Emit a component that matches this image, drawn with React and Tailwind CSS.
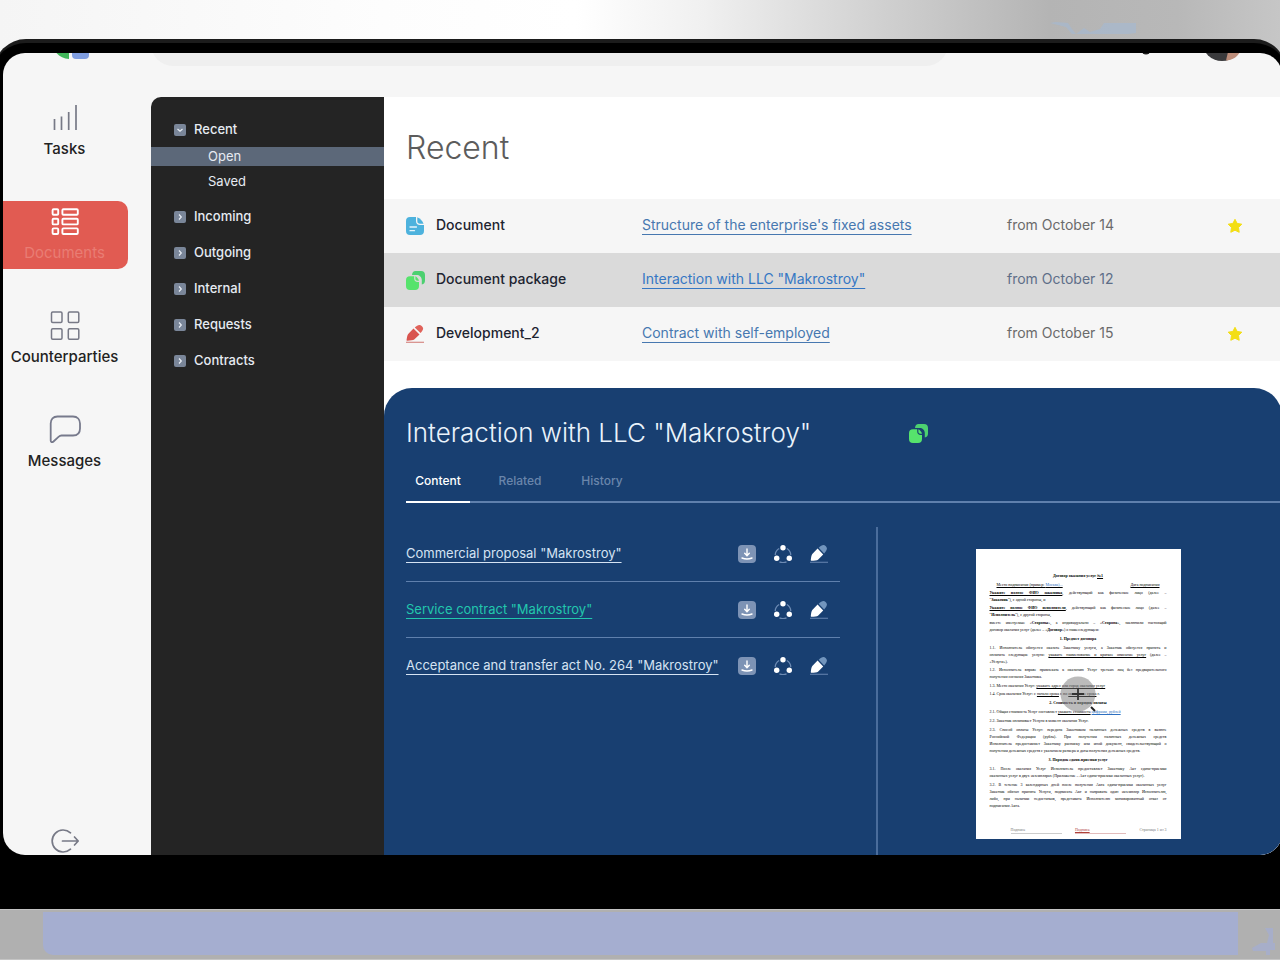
import { useState } from 'react';
import clsx from 'clsx';

const SECTIONS = [
  { label: 'Tasks', icon: TasksIcon },
  { label: 'Documents', icon: DocumentsIcon, active: true },
  { label: 'Counterparties', icon: CounterpartiesIcon },
  { label: 'Messages', icon: MessagesIcon }
];

const FOLDERS = [
  { label: 'Recent', children: ['Open', 'Saved'] },
  { label: 'Incoming' },
  { label: 'Outgoing' },
  { label: 'Internal' },
  { label: 'Requests' },
  { label: 'Contracts' }
];

const DOCUMENTS = [
  {
    name: 'Document',
    title: "Structure of the enterprise's fixed assets",
    date: 'from October 14',
    icon: FileIcon,
    starred: true
  },
  {
    name: 'Document package',
    title: 'Interaction with LLC "Makrostroy"',
    date: 'from October 12',
    icon: PackageIcon,
    selected: true
  },
  {
    name: 'Development_2',
    title: 'Contract with self-employed',
    date: 'from October 15',
    icon: DraftIcon,
    starred: true
  }
];

const TABS = ['Content', 'Related', 'History'];

const FILES = [
  { title: 'Commercial proposal "Makrostroy"' },
  { title: 'Service contract "Makrostroy"', active: true },
  { title: 'Acceptance and transfer act No. 264 "Makrostroy"' }
];

function TasksIcon() {
  return (
    <svg width="32" height="32" viewBox="0 0 32 32" fill="none" stroke="#777986" strokeWidth="1.7">
      <path d="M5.5 17v11M12.5 14.5v13.5M19.7 10v18M27 3v25" />
    </svg>
  );
}

function DocumentsIcon() {
  return (
    <svg width="32" height="32" viewBox="0 0 32 32" fill="none" stroke="#fff" strokeWidth="1.9">
      {[3.2, 12.8, 22.4].map((y) => (
        <g key={y}>
          <rect x="3.6" y={y} width="5.6" height="5.6" rx="1" />
          <rect x="13.4" y={y} width="15.4" height="5.6" rx="1" />
        </g>
      ))}
    </svg>
  );
}

function CounterpartiesIcon() {
  return (
    <svg width="32" height="32" viewBox="0 0 32 32" fill="none" stroke="#777986" strokeWidth="1.5">
      <rect x="2.5" y="2" width="10.5" height="10.5" rx="1.2" />
      <rect x="19.3" y="2" width="10.5" height="10.5" rx="1.2" />
      <rect x="2.5" y="18.8" width="10.5" height="10.5" rx="1.2" />
      <rect x="19.3" y="18.8" width="10.5" height="10.5" rx="1.2" />
    </svg>
  );
}

function MessagesIcon() {
  return (
    <svg width="32" height="32" viewBox="0 0 32 32" fill="none" stroke="#777a8c" strokeWidth="1.8" strokeLinejoin="round">
      <path d="M8.5 2.5H24c4.5 0 7 3 7 7v5c0 4.500-2.500 7-7 7H12.500c-1.500 0-2 .4-3 1.300L4.500 27.500c-1.500 1.200-2.800.6-2.800-1V9.500c0-4.500 2.500-7 6.800-7z" />
    </svg>
  );
}

function LogoutIcon() {
  return (
    <svg width="32" height="28" viewBox="0 0 32 28" fill="none" stroke="#777986" strokeWidth="1.7" strokeLinecap="round" strokeLinejoin="round">
      <path d="M21.5 5.800A11 11 0 1 0 21.500 22.200M13.500 14H29M25.500 10l3.700 4-3.700 4" />
    </svg>
  );
}

function Chevron({ open }) {
  return (
    <svg width="12" height="12" viewBox="0 0 12 12" fill="none">
      <rect width="12" height="12" rx="2" fill="#7a8699" />
      <path
        d={open ? 'M3.5 5L6 7.3 8.5 5' : 'M5 3.5L7.3 6 5 8.5'}
        stroke="#e8edf4"
        strokeWidth="1.2"
      />
    </svg>
  );
}

function FileIcon() {
  return (
    <svg width="18" height="18" viewBox="0 0 18 18">
      <path d="M4 0h6v4c0 2.500 1.500 4 4 4h4v6c0 2.600-1.400 4-4 4H4c-2.600 0-4-1.400-4-4V4c0-2.600 1.400-4 4-4z" fill="#4db2dd" />
      <path d="M11.300.3c2.600 1.200 5 3.400 6.300 6.500H14c-1.800 0-2.700-1-2.700-2.700z" fill="#4db2dd" />
      <path d="M4 10h6.500M4 13.700h4.500" stroke="#e3f4fb" strokeWidth="1.3" strokeLinecap="round" />
    </svg>
  );
}

function PackageIcon() {
  return (
    <svg width="19" height="19" viewBox="0 0 19 19">
      <path d="M9.500 0H15c2.700 0 4 1.300 4 4v5.500c0 2.200-1 3.700-3.200 4V9c0-3-2.500-5-5-5H6C6.200 1.300 7.400 0 9.500 0z" fill="#4cd070" />
      <path d="M4 5.200h4.200v2.300c0 2.200 1.200 3.500 3.500 3.500H13v4c0 2.700-1.300 4-4 4H4c-2.700 0-4-1.300-4-4V9.200c0-2.700 1.300-4 4-4z" fill="#56e36c" />
      <path d="M9.400 5.200c1.800 1 3 2.500 3.600 4.500h-1.600c-1.300 0-2-.7-2-2z" fill="#56e36c" />
    </svg>
  );
}

function DraftIcon() {
  return (
    <svg width="18" height="18" viewBox="0 0 18 18">
      <path d="M7.500 3.400l6 6-5.300 5.200c-.8.8-4 1.100-6.900 1.200-.6 0-.8-.4-.7-1 .3-2.300.7-5 1.600-5.900z" fill="#d9544f" />
      <path d="M8.800 2.600C11.600-.2 13.700-.7 15.700.9c2.100 1.800 1.900 4-1.200 7.200z" fill="#e0625a" />
      <path d="M0 17.300h18" stroke="#d68b86" strokeWidth="1.2" />
    </svg>
  );
}

function StarIcon() {
  return (
    <svg width="16" height="16" viewBox="0 0 16 16" fill="#f3de14" stroke="#f3de14" strokeLinejoin="round">
      <path d="M8 1.300l2.100 4.100 4.700.8-3.300 3.300.7 4.800L8 12.200l-4.200 2.100.7-4.800L1.200 6.200l4.700-.8z" />
    </svg>
  );
}

function DownloadIcon() {
  return (
    <svg width="18" height="18" viewBox="0 0 18 18" fill="none" strokeLinecap="round">
      <rect width="18" height="18" rx="4" fill="#7d93b5" />
      <path d="M9 4v6.500M6.700 8.300L9 10.700l2.300-2.400" stroke="#fff" strokeWidth="1.4" />
      <path d="M4 13c3 1.200 7 1.200 10 0" stroke="#fff" strokeWidth="1.4" />
    </svg>
  );
}

function ShareIcon() {
  return (
    <svg width="18" height="18" viewBox="0 0 18 18" fill="none">
      <path d="M5.200 3.500A8 8 0 0 0 1.200 10M12.800 3.500a8 8 0 0 1 4 6.500M5.500 16.800c2 1 5 1 7 0" stroke="#6d8bb4" strokeWidth="1.3" />
      <circle cx="9" cy="2.7" r="2.7" fill="#fff" />
      <circle cx="2.7" cy="13.3" r="2.7" fill="#fff" />
      <circle cx="15.3" cy="13.3" r="2.7" fill="#fff" />
    </svg>
  );
}

function SignIcon() {
  return (
    <svg width="18" height="18" viewBox="0 0 18 18">
      <path d="M7.600 3.600l5.600 5.900-5.200 5.200c-.8.800-3.800 1-6.500 1.100-.6 0-.8-.4-.7-1 .3-2.300.7-4.900 1.500-5.800z" fill="#fff" />
      <path d="M8.700 2.700C11.600-.2 13.800-.6 15.600.9c2.100 1.800 1.700 4.300-1.500 7.500z" fill="#7295bd" />
      <path d="M0 17.300h18" stroke="#5c7ba8" strokeWidth="1.2" />
    </svg>
  );
}

function TopBar() {
  return (
    <header className="-mt-8 flex h-[76px] shrink-0 items-start">
      <div className="flex w-[148px] shrink-0 justify-center pr-3">
        <svg width="36" height="38" viewBox="0 0 36 38">
          <path d="M0 19h16v19C9 37.500 3 34 0 26z" fill="#41b65a" />
          <rect x="19" y="19" width="17" height="19" rx="4" fill="#7f9de0" />
        </svg>
      </div>
      <input
        type="search"
        aria-label="Search"
        className="h-[45px] w-[797px] min-w-0 rounded-[22px] bg-[#efefef] px-6 outline-none"
      />
      <div className="ml-auto flex items-start gap-12 pr-10">
        <svg width="16" height="34" viewBox="0 0 16 34">
          <circle cx="8" cy="29" r="4.500" fill="#1c1c1c" />
        </svg>
        <svg width="40" height="40" viewBox="0 0 40 40">
          <circle cx="20" cy="20" r="20" fill="#3a3a3c" />
          <path d="M26 31h12c-3 5-7 8-14 8.500z" fill="#bd8d7a" />
        </svg>
      </div>
    </header>
  );
}

function SectionNav() {
  return (
    <aside className="flex w-[148px] shrink-0 flex-col justify-between">
      <nav className="flex flex-col gap-9">
        {SECTIONS.map(({ label, icon: Icon, active }) => (
          <a
            key={label}
            href="#"
            className={clsx(
              'flex h-[68px] w-[125px] flex-col items-center gap-[5px] pt-[5px] pr-0.5 text-[15px] leading-5 font-medium whitespace-nowrap',
              active ? 'rounded-r-[10px] bg-[#e15b52] text-[#e97d74]' : 'text-[#222]'
            )}
          >
            <Icon />
            <span className={clsx(active && 'font-normal')}>{label}</span>
          </a>
        ))}
      </nav>
      <button type="button" aria-label="Log out" className="flex w-[125px] justify-center pr-0.5">
        <LogoutIcon />
      </button>
    </aside>
  );
}

function FolderTree() {
  return (
    <nav className="flex w-[233px] shrink-0 flex-col gap-4 rounded-tl-[10px] bg-[#242424] pt-[23px] text-[13px] text-[#e6ebf2]">
      {FOLDERS.map(({ label, children }) => (
        <div key={label}>
          <button type="button" className="flex h-5 items-center gap-2 pl-[23px] font-medium">
            <Chevron open={Boolean(children)} />
            {label}
          </button>
          {children && (
            <div className="mt-[7px] flex flex-col gap-1.5">
              {children.map((child) => (
                <a
                  key={child}
                  href="#"
                  className={clsx('h-[19px] pl-[57px] leading-[18px]', child === 'Open' && 'bg-[#5c6879]')}
                >
                  {child}
                </a>
              ))}
            </div>
          )}
        </div>
      ))}
    </nav>
  );
}

function DocumentTable() {
  return (
    <table className="w-full table-fixed text-left text-[14px]">
      <colgroup>
        <col className="w-[52px]" />
        <col className="w-[206px]" />
        <col className="w-[365px]" />
        <col />
        <col className="w-[55px]" />
      </colgroup>
      <tbody>
        {DOCUMENTS.map(({ name, title, date, icon: Icon, starred, selected }) => (
          <tr key={name} className={clsx('h-[54px]', selected ? 'bg-[#dadada]' : 'bg-[#f6f6f6]')}>
            <td className="pl-[22px]">
              <Icon />
            </td>
            <td className="pb-1 font-medium text-[#1d2430]">{name}</td>
            <td className="pb-1">
              <a
                href="#"
                className={clsx(
                  'underline decoration-1 underline-offset-4',
                  selected ? 'text-[#3577c4]' : 'text-[#4778b0]'
                )}
              >
                {title}
              </a>
            </td>
            <td className={clsx('pb-1', selected ? 'text-[#5e6e88]' : 'text-[#6a6a6a]')}>{date}</td>
            <td>{starred && <StarIcon />}</td>
          </tr>
        ))}
      </tbody>
    </table>
  );
}

function Line({ full, center, className, children }) {
  return (
    <p
      className={clsx(
        'whitespace-nowrap',
        full && '[text-align-last:justify]',
        center && 'text-center font-bold',
        className
      )}
    >
      {children}
    </p>
  );
}

function Preview() {
  return (
    <div className="relative flex h-[290px] w-[205px] flex-col overflow-hidden bg-white px-[14px] pt-[23px] pb-[5px] font-['Liberation_Serif',serif] text-[4px] leading-[7px] text-black">
      <div className="flex flex-col gap-px">
        <Line center>
          Договор оказания услуг <u>№1</u>
        </Line>
        <div className="flex justify-between px-[7px] pt-px">
          <u>
            Место подписания (пример: <span className="text-[#2d6fc0]">Москва)...</span>
          </u>
          <u>Дата подписания</u>
        </div>
        <div>
          <Line full>
            <b className="underline">Укажите полное ФИО заказчика</b>, действующий как физическое лицо (далее –
          </Line>
          <Line>
            "<b>Заказчик</b>"), с одной стороны, и
          </Line>
        </div>
        <div>
          <Line full>
            <b className="underline">Укажите полное ФИО исполнителя</b>, действующий как физическое лицо (далее –
          </Line>
          <Line>
            "<b>Исполнитель</b>"), с другой стороны,
          </Line>
        </div>
        <div>
          <Line full>
            вместе именуемые «<b>Стороны</b>», а индивидуально – «<b>Сторона</b>», заключили настоящий
          </Line>
          <Line>
            договор оказания услуг (далее – «<b>Договор</b>») о нижеследующем:
          </Line>
        </div>
        <Line center className="py-px">1. Предмет договора</Line>
        <div>
          <Line full>1.1. Исполнитель обязуется оказать Заказчику услуги, а Заказчик обязуется принять и</Line>
          <Line full>
            оплатить следующие услуги: <u>укажите наименование и краткое описание услуг</u> (далее –
          </Line>
          <Line>«Услуги»).</Line>
        </div>
        <div>
          <Line full>1.2. Исполнитель вправе привлекать к оказанию Услуг третьих лиц без предварительного</Line>
          <Line>получения согласия Заказчика.</Line>
        </div>
        <Line className="pt-px">
          1.3. Место оказания Услуг: <u>укажите адрес или город оказания услуг</u>
        </Line>
        <Line>
          1.4. Срок оказания Услуг: с <u>начало срока</u> г. по <u>окончание срока</u> г.
        </Line>
        <Line center className="py-px">2. Стоимость и порядок оплаты</Line>
        <Line>
          2.1. Общая стоимость Услуг составляет <u>укажите стоимость</u>{' '}
          <u className="text-[#2d6fc0]">цифрами, рублей</u>
        </Line>
        <Line className="py-px">2.2. Заказчик оплачивает Услуги в момент оказания Услуг.</Line>
        <div>
          <Line full>2.3. Способ оплаты Услуг: передача Заказчиком наличных денежных средств в валюте</Line>
          <Line full>Российской Федерации (рубль). При получении наличных денежных средств</Line>
          <Line full>Исполнитель предоставляет Заказчику расписку или иной документ, свидетельствующий о</Line>
          <Line>получении денежных средств с указанием размера и даты получения денежных средств.</Line>
        </div>
        <Line center className="py-px">3. Порядок сдачи-приемки услуг</Line>
        <div>
          <Line full>3.1. После оказания Услуг Исполнитель предоставляет Заказчику Акт сдачи-приемки</Line>
          <Line>оказанных услуг в двух экземплярах (Приложение – Акт сдачи-приемки оказанных услуг).</Line>
        </div>
        <div className="pt-px">
          <Line full>3.2. В течение 3 календарных дней после получения Акта сдачи-приемки оказанных услуг</Line>
          <Line full>Заказчик обязан принять Услуги, подписать Акт и направить один экземпляр Исполнителю,</Line>
          <Line full>либо, при наличии недостатков, представить Исполнителю мотивированный отказ от</Line>
          <Line>подписания Акта.</Line>
        </div>
      </div>
      <div className="mt-auto flex justify-between pl-[21px] text-[#777]">
        <span className="w-[51px] border-b border-[#ccc]">Подпись</span>
        <span className="w-[51px] border-b border-[#e2bcbc] text-[#b0413a] underline">Подпись</span>
        <span>Страница 1 из 3</span>
      </div>
      <svg className="absolute top-[127px] left-[84px]" width="36" height="36" viewBox="0 0 36 36">
        <circle cx="18" cy="18" r="17.5" fill="#777" fillOpacity=".5" />
        <path d="M12 18h12M18 12v12" stroke="#333" strokeWidth="1.8" />
        <path d="M31 31l4 4" stroke="#222" strokeWidth="2" />
      </svg>
    </div>
  );
}

function DetailPanel() {
  const [tab, setTab] = useState('Content');

  return (
    <section className="flex min-w-0 flex-1 flex-col rounded-t-[28px] bg-[#183f71] pl-[22px]">
      <div className="flex h-[84px] items-center pt-1.5 pr-[354px]">
        <h2 className="flex-1 text-[26px] leading-8 font-light whitespace-nowrap text-[#eaf3fb]">
          Interaction with LLC "Makrostroy"
        </h2>
        <PackageIcon />
      </div>
      <div role="tablist" className="flex h-[31px] gap-[18px] border-b-2 border-[#5f80ad] text-[12px] leading-4">
        {TABS.map((name) => (
          <button
            key={name}
            type="button"
            role="tab"
            aria-selected={tab === name}
            onClick={() => setTab(name)}
            className={clsx(
              '-mb-[2px] flex w-16 justify-center border-b-2 pt-px font-medium',
              tab === name ? 'border-white text-white' : 'border-transparent text-[#6a86ab]'
            )}
          >
            {name}
          </button>
        ))}
      </div>
      <div className="flex flex-1 pt-6">
        <ul className="-mt-px w-[434px] shrink-0 text-[13px]">
          {FILES.map(({ title, active }) => (
            <li key={title} className="flex h-14 items-center gap-[18px] border-b border-[#5f80ad] pr-3 last:border-b-0">
              <a
                href="#"
                className={clsx(
                  'min-w-0 flex-1 whitespace-nowrap underline decoration-1 underline-offset-4',
                  active ? 'text-[#22c7ad]' : 'text-[#d5e3f3]'
                )}
              >
                {title}
              </a>
              <button type="button" aria-label="Download">
                <DownloadIcon />
              </button>
              <button type="button" aria-label="Share">
                <ShareIcon />
              </button>
              <button type="button" aria-label="Sign">
                <SignIcon />
              </button>
            </li>
          ))}
        </ul>
        <div className="ml-9 flex flex-1 justify-center border-l-2 border-[#4a6d9c] pt-[22px] pr-1">
          <Preview />
        </div>
      </div>
    </section>
  );
}

export default function App() {
  return (
    <div className="flex min-h-screen flex-col overflow-hidden bg-[linear-gradient(90deg,#f5f5f5_0%,#fdfdfd_30%,#ffffff_45%,#f0f0f0_55%,#d0d0d0_69%,#b4b4b4_82%,#b8b8b8_92%,#c6c6c6_100%)] font-[Inter,sans-serif]">
      <div className="flex h-[39px] shrink-0 items-end justify-end pr-36">
        <svg width="86" height="19" viewBox="0 0 86 19" fill="#a3b9d3">
          <path d="M0 3l6-1 12 1 4 6 4 5 8-6 6 4 10-3 4-6h32v10l-8 1H22l-6-7z" fillOpacity=".6" />
        </svg>
      </div>
      <div className="-mx-1.5 flex flex-1 flex-col rounded-t-[32px] border-t-4 border-[#1c1c1c] bg-black pt-[10px] pr-1 pb-[54px] pl-[9px]">
        <div className="flex flex-1 flex-col overflow-hidden rounded-[22px] bg-[#f6f6f6]">
          <TopBar />
          <div className="flex flex-1">
            <SectionNav />
            <FolderTree />
            <main className="flex min-w-0 flex-1 flex-col bg-white">
              <h1 className="flex h-[102px] items-center pl-[22px] text-[32px] font-light text-[#5c5c5c]">Recent</h1>
              <DocumentTable />
              <div className="mt-[27px] flex flex-1">
                <DetailPanel />
              </div>
            </main>
          </div>
        </div>
      </div>
      <div className="flex h-[51px] shrink-0 items-stretch border-y border-[#c4c4c4] bg-[#b0b0b0] pt-0.5 pr-1 pb-1 pl-[43px]">
        <div className="flex-1 rounded-bl-[10px] bg-[#a5aed0]" />
        <svg width="38" height="43" viewBox="0 0 38 43" fill="#a5aed0">
          <path d="M27 16h8v15h2v7h-5v5h-4v-4H15l-1-3 9-5h6l2-8z" fillOpacity=".8" />
        </svg>
      </div>
    </div>
  );
}
